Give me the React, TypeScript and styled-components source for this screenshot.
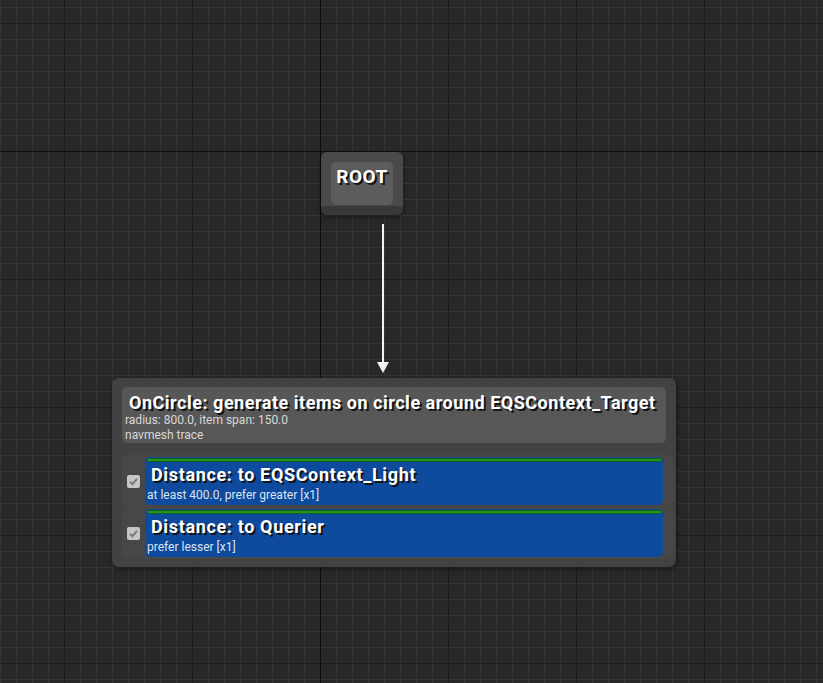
import React from "react";
import styled, { createGlobalStyle } from "styled-components";

const GlobalStyle = createGlobalStyle`
  html, body { margin: 0; padding: 0; background: #282828; }
  body { font-family: Roboto, "Noto Sans", "Liberation Sans", sans-serif; }
  #root { width: 823px; height: 683px; }
`;

const Canvas = styled.div`
  position: relative;
  width: 823px;
  height: 683px;
  overflow: hidden;
  background-color: #282828;
  background-image:
    linear-gradient(to right, transparent 320px, #0c0c0c 320px, #0c0c0c 321px, transparent 321px),
    linear-gradient(to bottom, transparent 151px, #0c0c0c 151px, #0c0c0c 152px, transparent 152px),
    linear-gradient(to right, #1c1c1c 1px, transparent 1px),
    linear-gradient(to bottom, #1c1c1c 1px, transparent 1px),
    linear-gradient(to right, #353535 1px, transparent 1px),
    linear-gradient(to bottom, #353535 1px, transparent 1px);
  background-size:
    100% 100%,
    100% 100%,
    128px 100%,
    100% 128px,
    16px 100%,
    100% 16px;
  background-position:
    0 0,
    0 0,
    64px 0,
    0 23px,
    0 0,
    0 7px;
  background-repeat: no-repeat, no-repeat, repeat-x, repeat-y, repeat-x, repeat-y;
`;

const RootNode = styled.div`
  position: absolute;
  left: 321px;
  top: 152px;
  width: 82px;
  display: flex;
  flex-direction: column;
  border-radius: 6px;
  overflow: hidden;
  box-shadow: 0 2px 4px rgba(0, 0, 0, 0.45);
`;

const RootBody = styled.div`
  background: #4a4a4a;
  padding: 10px 10px 1px;
`;

const RootLabel = styled.div`
  height: 43px;
  box-sizing: border-box;
  padding-top: 4px;
  background: #5c5c5c;
  border-radius: 5px;
  text-align: center;
  font: 700 19px/21px Roboto, sans-serif;
  letter-spacing: 0.5px;
  color: #ffffff;
  text-shadow: 2px 2px 0 #151515;
`;

const RootFooter = styled.div`
  height: 9px;
  background: #393939;
`;

const Wire = styled.svg`
  position: absolute;
  left: 376px;
  top: 224px;
  width: 14px;
  height: 150px;
  overflow: visible;
`;

const CompositeNode = styled.div`
  position: absolute;
  left: 112px;
  top: 378px;
  width: 564px;
  box-sizing: border-box;
  padding: 9px 2px 8px 10px;
  display: flex;
  flex-direction: column;
  background: #424242;
  border-radius: 7px;
  box-shadow: 1px 2px 4px rgba(0, 0, 0, 0.5);
`;

const Header = styled.div`
  height: 56px;
  box-sizing: border-box;
  margin: 0 8px 12px 0;
  padding: 5px 0 0 3px;
  background: #575757;
  border-radius: 5px;
  display: flex;
  flex-direction: column;
`;

const Title = styled.div<{ $indent: number; $spacing: number }>`
  margin-left: ${(p) => p.$indent}px;
  font: 700 18px/21px Roboto, sans-serif;
  letter-spacing: ${(p) => p.$spacing}px;
  color: #ffffff;
  text-shadow: 2px 2px 0 #141414;
  white-space: nowrap;
`;

const Detail = styled.div<{ $tint: string }>`
  font: 400 12px/15px Roboto, sans-serif;
  color: ${(p) => p.$tint};
  white-space: nowrap;
`;

const TestList = styled.div`
  display: flex;
  flex-direction: column;
`;

const TestRow = styled.div`
  display: flex;
  align-items: center;
  gap: 5px;
  padding: 2px 11px 2px 5px;
  background: #474747;
  border-radius: 6px;
`;

const CheckBox = styled.div`
  width: 13px;
  height: 13px;
  flex: none;
  border-radius: 2px;
  background: #c6c6c6;
  display: flex;
  align-items: center;
  justify-content: center;
`;

const TestCard = styled.div`
  flex: 1;
  display: flex;
  flex-direction: column;
  padding: 1px 0 3px;
  background: #0e4a9d;
  border-radius: 5px;
`;

const GreenBar = styled.div`
  box-sizing: content-box;
  height: 2px;
  margin: 0 2px 0 3px;
  background: #24961f;
  border-top: 1px solid #115f1c;
  border-bottom: 1px solid #115f1c;
  border-radius: 1px;
`;

const CardTitle = styled(Title)`
  margin-top: 2px;
  line-height: 22px;
`;

const CardDetail = styled(Detail)`
  margin-top: 2px;
  padding-left: 2px;
  line-height: 14px;
`;

const tests = [
  { title: "Distance: to EQSContext_Light", detail: "at least 400.0, prefer greater [x1]" },
  { title: "Distance: to Querier", detail: "prefer lesser [x1]" },
];

const Check = () => (
  <svg width="11" height="11" viewBox="0 0 11 11">
    <polyline points="2,5.8 4.4,8.2 9,2.8" fill="none" stroke="#7b7b7b" strokeWidth="2" />
  </svg>
);

export default function App() {
  return (
    <>
      <GlobalStyle />
      <Canvas>
        <RootNode>
          <RootBody>
            <RootLabel>ROOT</RootLabel>
          </RootBody>
          <RootFooter />
        </RootNode>

        <Wire viewBox="0 0 14 150">
          <rect x="6" y="0" width="2" height="140" fill="#f2f2f2" />
          <polygon points="1,138 13,138 7,149" fill="#f2f2f2" />
        </Wire>

        <CompositeNode>
          <Header>
            <Title $indent={4} $spacing={0.52}>
              OnCircle: generate items on circle around EQSContext_Target
            </Title>
            <Detail $tint="#d9d9d9">radius: 800.0, item span: 150.0</Detail>
            <Detail $tint="#d9d9d9">navmesh trace</Detail>
          </Header>
          <TestList>
            {tests.map((t) => (
              <TestRow key={t.title}>
                <CheckBox>
                  <Check />
                </CheckBox>
                <TestCard>
                  <GreenBar />
                  <CardTitle $indent={6} $spacing={0.65}>
                    {t.title}
                  </CardTitle>
                  <CardDetail $tint="#dce4f2">{t.detail}</CardDetail>
                </TestCard>
              </TestRow>
            ))}
          </TestList>
        </CompositeNode>
      </Canvas>
    </>
  );
}
